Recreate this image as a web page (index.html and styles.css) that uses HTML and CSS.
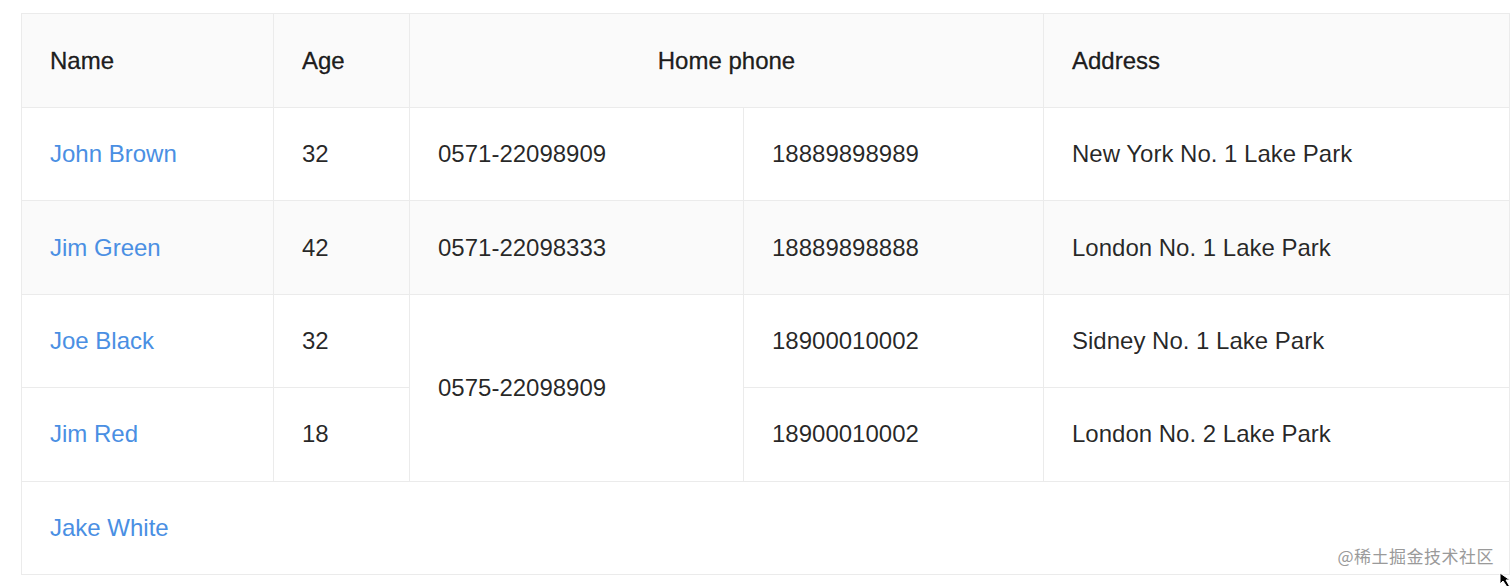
FILE: index.html
```html
<!DOCTYPE html>
<html>
<head>
<meta charset="utf-8">
<link rel="stylesheet" href="styles.css">
</head>
<body>
<div class="wrap">
  <table class="tbl">
    <colgroup>
      <col class="c-name"><col class="c-age"><col class="c-p1"><col class="c-p2"><col class="c-addr">
    </colgroup>
    <thead>
      <tr>
        <th>Name</th>
        <th>Age</th>
        <th colspan="2" class="center">Home phone</th>
        <th>Address</th>
      </tr>
    </thead>
    <tbody>
      <tr>
        <td><a class="link">John Brown</a></td>
        <td>32</td>
        <td>0571-22098909</td>
        <td>18889898989</td>
        <td>New York No. 1 Lake Park</td>
      </tr>
      <tr class="hover">
        <td><a class="link">Jim Green</a></td>
        <td>42</td>
        <td>0571-22098333</td>
        <td>18889898888</td>
        <td>London No. 1 Lake Park</td>
      </tr>
      <tr>
        <td><a class="link">Joe Black</a></td>
        <td>32</td>
        <td rowspan="2">0575-22098909</td>
        <td>18900010002</td>
        <td>Sidney No. 1 Lake Park</td>
      </tr>
      <tr>
        <td><a class="link">Jim Red</a></td>
        <td>18</td>
        <td>18900010002</td>
        <td>London No. 2 Lake Park</td>
      </tr>
      <tr>
        <td colspan="5"><a class="link">Jake White</a></td>
      </tr>
    </tbody>
  </table>
  <div class="watermark">@稀土掘金技术社区</div>
  <svg class="cursor" width="16" height="16" viewBox="0 0 16 16"><path d="M1 1 L1 12 L4 9 L8 15 L10.5 14 L7 8 L11 8 Z" fill="#000" stroke="#fff" stroke-width="1"/></svg>
</div>
</body>
</html>
```

FILE: styles.css
```css
html, body {
  margin: 0;
  padding: 0;
  background: #fff;
}
body {
  font-family: "Liberation Sans", Arial, sans-serif;
  color: rgba(0, 0, 0, 0.85);
  overflow: hidden;
}
.wrap {
  position: relative;
  width: 1512px;
  height: 586px;
  padding: 13px 3px 0 21px;
  box-sizing: border-box;
}
.tbl {
  width: 1488px;
  border-collapse: collapse;
  table-layout: fixed;
  font-size: 24px;
  border: 1px solid #f0f0f0;
  border-bottom: none;
}
.c-name { width: 252px; }
.c-age { width: 136px; }
.c-p1 { width: 334px; }
.c-p2 { width: 300px; }
.c-addr { width: 466px; }
.tbl th, .tbl td {
  border: 1px solid #ebebeb;
  padding: 0 28px;
  text-align: left;
  line-height: 36px;
  height: 93.4px;
  box-sizing: border-box;
  white-space: nowrap;
}
.tbl th {
  background: #fafafa;
  font-weight: 500;
  color: rgba(0, 0, 0, 0.88);
  height: 94px;
  -webkit-text-stroke: 0.35px rgba(0,0,0,0.85);
}
.tbl th.center { text-align: center; }
.tbl tr.hover td { background: #fafafa; }
.link {
  color: #4a8fe3;
  text-decoration: none;
}
.watermark {
  position: absolute;
  right: 18px;
  bottom: 18px;
  font-family: "Noto Sans CJK SC", sans-serif;
  font-size: 17px;
  color: #9a9a9a;
  letter-spacing: 0.5px;
}
.cursor {
  position: absolute;
  right: -3px;
  bottom: -2px;
}
```
